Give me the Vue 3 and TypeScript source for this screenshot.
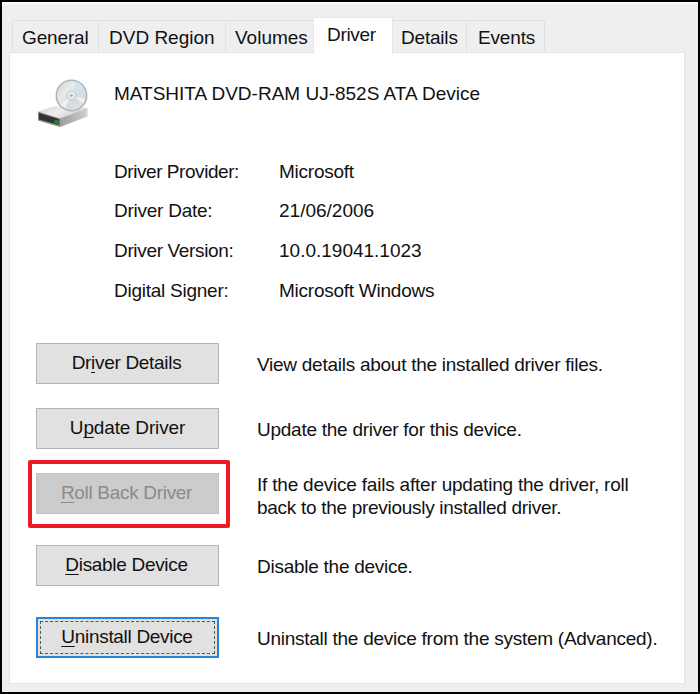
<script setup lang="ts">
interface Tab { label: string; key: string; active?: boolean }
interface Detail { label: string; value: string; key: string }
interface Action { before: string; accel: string; after: string; text: string[]; key: string; disabled?: boolean }

const tabs: Tab[] = [
  { label: 'General', key: 'general' },
  { label: 'DVD Region', key: 'region' },
  { label: 'Volumes', key: 'volumes' },
  { label: 'Driver', key: 'driver', active: true },
  { label: 'Details', key: 'info' },
  { label: 'Events', key: 'events' },
]

const details: Detail[] = [
  { label: 'Driver Provider:', value: 'Microsoft', key: 'provider' },
  { label: 'Driver Date:', value: '21/06/2006', key: 'date' },
  { label: 'Driver Version:', value: '10.0.19041.1023', key: 'version' },
  { label: 'Digital Signer:', value: 'Microsoft Windows', key: 'signer' },
]

const actions: Action[] = [
  { before: 'Dr', accel: 'i', after: 'ver Details', text: ['View details about the installed driver files.'], key: 'view' },
  { before: 'U', accel: 'p', after: 'date Driver', text: ['Update the driver for this device.'], key: 'update' },
  { before: '', accel: 'R', after: 'oll Back Driver', text: ['If the device fails after updating the driver, roll', 'back to the previously installed driver.'], key: 'rollback', disabled: true },
  { before: '', accel: 'D', after: 'isable Device', text: ['Disable the device.'], key: 'disable' },
  { before: '', accel: 'U', after: 'ninstall Device', text: ['Uninstall the device from the system (Advanced).'], key: 'uninstall' },
]
</script>

<template>
  <main class="window">
    <nav class="tabs">
      <div v-for="t in tabs" :key="t.key" class="tab" :class="[t.key, { active: t.active }]"><span>{{ t.label }}</span></div>
    </nav>
    <section class="page">
      <header class="device">
        <svg class="drive" width="56" height="54" viewBox="0 0 56 54">
          <defs>
            <linearGradient id="disc" x1="0" y1="0" x2="1" y2="1">
              <stop offset="0" stop-color="#cfd3d6" />
              <stop offset=".35" stop-color="#e6eaec" />
              <stop offset=".6" stop-color="#d4dce2" />
              <stop offset="1" stop-color="#dee1e3" />
            </linearGradient>
            <linearGradient id="lid" x1="0" y1="0" x2="1" y2=".6">
              <stop offset="0" stop-color="#d2d2d2" />
              <stop offset=".5" stop-color="#eeeeee" />
              <stop offset="1" stop-color="#cccccc" />
            </linearGradient>
            <linearGradient id="side" x1="0" y1="0" x2="1" y2="0">
              <stop offset="0" stop-color="#9c9c9c" />
              <stop offset="1" stop-color="#d0d0d0" />
            </linearGradient>
          </defs>
          <path d="M3 34.5 L20 29 L52.5 31 L25 42 Z" fill="url(#lid)" />
          <path d="M25 41.5 L52.5 31 V39.5 L25 50 Z" fill="url(#side)" />
          <path d="M3 34.5 L25 41.5 V50 L3 43.5 Z" fill="#8b8b8b" />
          <path d="M4 36 L24.3 42.2 V48 L4 42.5 Z" fill="#303331" />
          <path d="M19.5 43.5 L21 42.8 L24 44 V46.7 L19 46 Z" fill="#238a30" />
          <circle cx="36.5" cy="18.5" r="15.2" fill="url(#disc)" stroke="#b1b5b8" stroke-width="1.6" />
          <path d="M37 18 L41 4.8 A14.2 14.2 0 0 1 47.5 9.5 Z" fill="#d1e5f1" />
          <path d="M36 19 L25 27 A14.2 14.2 0 0 0 30 31 Z" fill="#eff2f4" />
          <path d="M37 18 L48 26 A14.2 14.2 0 0 0 50 22 Z" fill="#eff2f4" />
          <circle cx="36.5" cy="18.5" r="4.7" fill="#e3e6e8" stroke="#c3c8cb" />
          <circle cx="36.5" cy="18.5" r="1.8" fill="#a3a9ad" stroke="#f8f8f8" />
        </svg>
        <h1><span>MATSHITA DVD-RAM UJ-852S ATA Device</span></h1>
      </header>
      <dl class="details">
        <div v-for="d in details" :key="d.key" class="detail" :class="d.key">
          <dt><span>{{ d.label }}</span></dt>
          <dd><span>{{ d.value }}</span></dd>
        </div>
      </dl>
      <div class="actions">
        <div v-for="a in actions" :key="a.key" class="action" :class="a.key">
          <button :disabled="a.disabled"><span>{{ a.before }}<i>{{ a.accel }}</i>{{ a.after }}</span></button>
          <p><span v-for="line in a.text" :key="line">{{ line }}</span></p>
          <div v-if="a.disabled" class="highlight"></div>
        </div>
      </div>
    </section>
  </main>
</template>

<style>
body { margin: 0; background: #efefef; }
</style>

<style scoped>
* { box-sizing: border-box; }
.window {
  width: 700px; height: 694px; padding: 14px 13px 8px 7px;
  border: 2px solid #000; background: #efefef; box-shadow: inset 0 2px #fff;
  font: 19px/23px "Liberation Sans", Arial, sans-serif; color: #111;
  display: flex; flex-direction: column;
}
.tabs { display: flex; align-items: flex-end; height: 36px; padding-left: 3px; flex: none; position: relative; z-index: 1; }
.tab { height: 32px; padding: 5px 0 0 9px; border: 1px solid #e2e2e2; border-bottom: 0; border-left-width: 0; white-space: nowrap; }
.tab.general { width: 87px; border-left-width: 1px; letter-spacing: -.15px; }
.tab.region { width: 127px; padding-left: 10px; }
.tab.volumes { width: 88px; border-right: 0; padding-left: 9px; }
.tab.driver { width: 80px; height: 37px; margin: 0 0 -2px -1px; padding: 5px 0 0 13px; background: #fff; border: 1px solid #e6e6e6; border-bottom: 0; letter-spacing: -.33px; }
.tab.info { width: 74px; padding-left: 8px; letter-spacing: -.2px; }
.tab.events { width: 78px; padding-left: 11px; letter-spacing: -.15px; }
.page { flex: 1; background: #fff; border: 1px solid #e4e4e4; padding: 23px 0 0 25px; }
.device { display: flex; height: 54px; }
.drive { flex: none; margin-top: 1px; }
h1 { font: inherit; margin: 6px 0 0 23px; white-space: nowrap; }
.details { margin: 30px 0 0 79px; }
.detail { display: flex; height: 40px; white-space: nowrap; letter-spacing: -.25px; }
.detail.provider { height: 39px; }
.provider dt { letter-spacing: -.44px; }
.version dt { letter-spacing: -.34px; }
.date dd, .version dd { letter-spacing: 0; }
dt { width: 165px; }
dd { margin: 0; }
.actions { margin: 24px 0 0 1px; }
.action { display: flex; position: relative; height: 41px; margin-bottom: 24px; letter-spacing: -.26px; }
.rollback { margin-bottom: 31px; }
.disable { margin-bottom: 31px; }
button {
  width: 183px; height: 41px; flex: none; padding: 0 2px 2px 0; border: 1px solid #b4b4b4;
  background: #e1e1e1; color: #111; font: inherit; white-space: nowrap; letter-spacing: -.31px;
}
button:disabled { background: #ccc; border-color: #c2c2c2; color: #8b8b8b; }
.update button { letter-spacing: -.15px; padding-right: 0; }
.uninstall button { border: 2px solid #2585dc; outline: 1px dashed #555; outline-offset: -5px; padding-right: 1px; }
i { font-style: normal; text-decoration: underline 1px; text-underline-offset: 3px; text-decoration-skip-ink: none; }
p { margin: 10px 0 0 38px; white-space: nowrap; }
p span { display: block; width: max-content; }
.rollback p { margin-top: 0; }
.rollback p span:first-child { letter-spacing: -.21px; }
.rollback p span:last-child { letter-spacing: -.29px; }
.highlight { position: absolute; left: -8px; top: -13px; width: 202px; height: 68px; border: 4px solid #ed1c24; border-radius: 2px; }
</style>
